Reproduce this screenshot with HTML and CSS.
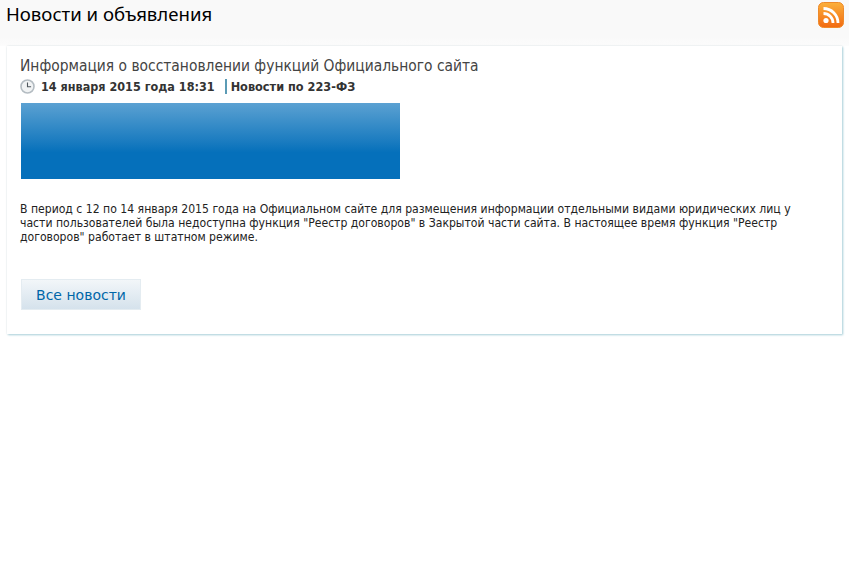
FILE: index.html
```html
<!DOCTYPE html>
<html lang="ru">
<head>
    <meta charset="UTF-8">
    <title>Новости и объявления</title>
    <link rel="stylesheet" href="styles.css">
</head>
<body>
<!--шапка-->
<div class="head">
    <h1 class="head-title">Новости и объявления</h1>
    <a class="rss" href="#">
        <svg width="26" height="26" viewBox="0 0 26 26">
            <defs>
                <linearGradient id="rssBg" x1="0" y1="0" x2="0" y2="1">
                    <stop offset="0" stop-color="#fbb03b"/>
                    <stop offset="1" stop-color="#f26a12"/>
                </linearGradient>
            </defs>
            <rect x="0.5" y="0.5" width="25" height="25" rx="5" fill="url(#rssBg)" stroke="#ee8a2a"/>
            <circle cx="8" cy="18.5" r="2.6" fill="#fff"/>
            <path d="M5.5 11.5a9.5 9.5 0 0 1 9.5 9.5" fill="none" stroke="#fff" stroke-width="2.8"/>
            <path d="M5.5 6.5a14.5 14.5 0 0 1 14.5 14.5" fill="none" stroke="#fff" stroke-width="2.8"/>
        </svg>
    </a>
</div>
<!--новость-->
<div class="card">
    <h2 class="news-title">Информация о восстановлении функций Официального сайта</h2>
    <div class="meta">
        <svg class="clock" width="15" height="15" viewBox="0 0 15 15">
            <circle cx="7.5" cy="7.5" r="6.5" fill="#f1f3f4" stroke="#b4bcc2" stroke-width="1.6"/>
            <path d="M7.5 3.5v4.2h3.6" fill="none" stroke="#4f575d" stroke-width="1.1"/>
        </svg>
        <span class="date">14 января 2015 года 18:31</span>
        <span class="section">Новости по 223-ФЗ</span>
    </div>
    <div class="banner"></div>
    <p class="text">В период с 12 по 14 января 2015 года на Официальном сайте для размещения информации отдельными видами юридических лиц у<br>части пользователей была недоступна функция "Реестр договоров" в Закрытой части сайта. В настоящее время функция "Реестр<br>договоров" работает в штатном режиме.</p>
    <a class="btn" href="#">Все новости</a>
</div>
</body>
</html>
```
FILE: styles.css
```css
*{margin:0;padding:0;box-sizing:border-box;}
body{min-height:100vh;background:#fff;font-family:"DejaVu Sans Condensed","DejaVu Sans",sans-serif;color:#222;}
a{text-decoration:none;}

/*шапка*/
.head{
    display:flex;
    justify-content:space-between;
    height:46px;
    padding:2px 5px 0 6px;
    background:linear-gradient(#f9f9f9 80%,#fcfcfc);
}
.head-title{
    margin-top:-1px;
    font-family:"Noto Sans",sans-serif;
    font-size:18.6px;
    line-height:26px;
    font-weight:400;
    color:#000;
}
.rss{
    display:block;
    height:26px;
}

/*новость*/
.card{
    height:288px;
    margin:0 7px;
    padding:11px 14px 0 13px;
    background:#fff;
    box-shadow:1px 1px 2px #a9d0da,0 0 2px #e6e6e6;
}
.news-title{
    font-size:15.4px;
    line-height:19px;
    font-weight:400;
    color:#444;
}
.meta{
    display:flex;
    align-items:center;
    height:18px;
    margin-top:1px;
    font-size:12.5px;
    font-weight:700;
    color:#333;
}
.clock{
    margin-right:6px;
}
.date{
    margin-right:10px;
}
.section{
    padding-left:4px;
    border-left:2px solid #5b9bb5;
    font-size:12.6px;
    line-height:15px;
}
.banner{
    width:379px;
    height:76px;
    margin:8px 0 0 1px;
    background:linear-gradient(#5ba1d2,#1b7cc0 50%,#0570bb 65%,#0570bb);
}
.text{
    margin-top:23px;
    font-size:12.1px;
    line-height:14px;
    color:#222;
}
.btn{
    display:block;
    width:120px;
    height:31px;
    margin:35px 0 0 1px;
    background:linear-gradient(#f2f6f9,#d5e2ec);
    border:1px solid #e4ecf1;
    font-family:"DejaVu Sans",sans-serif;
    font-size:14px;
    line-height:30px;
    text-align:center;
    color:#0066a8;
}
```
